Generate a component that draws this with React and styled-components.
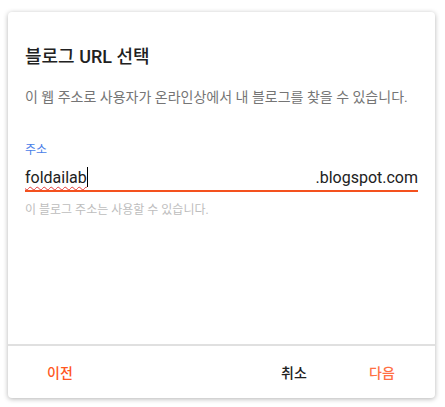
import React from "react";
import styled, { createGlobalStyle } from "styled-components";

const GlobalStyle = createGlobalStyle`
  html, body {
    margin: 0;
    padding: 0;
    background: #fff;
    font-family: Roboto, "Noto Sans CJK KR", sans-serif;
  }
`;

const Page = styled.div`
  padding: 12px 10px 9px 8px;
`;

const Card = styled.div`
  width: 427px;
  height: 386px;
  box-sizing: border-box;
  background: #fff;
  border-radius: 4px;
  box-shadow: 0 1px 5px rgba(0, 0, 0, 0.3);
  display: flex;
  flex-direction: column;
`;

const Body = styled.div`
  flex: 1;
  padding: 33px 17px 0 17px;
`;

const Title = styled.h2`
  margin: 0;
  font-size: 18px;
  font-weight: 500;
  color: #212121;
  line-height: 24px;
`;

const Desc = styled.p`
  margin: 18px 0 0;
  font-size: 14px;
  color: #757575;
  line-height: 20px;
`;

const Label = styled.div`
  margin-top: 35px;
  font-size: 12px;
  color: #4a7ee8;
  line-height: 16px;
`;

const Field = styled.div`
  margin-top: 9px;
  display: flex;
  align-items: flex-end;
  justify-content: space-between;
  border-bottom: 2px solid #f4511e;
  padding-bottom: 1px;
  font-size: 16px;
  color: #212121;
  line-height: 22px;
`;

const Typed = styled.span`
  text-decoration: underline wavy #e53935;
  text-decoration-thickness: 1px;
  text-underline-offset: 3px;
`;

const Caret = styled.span`
  display: inline-block;
  width: 1px;
  height: 20px;
  background: #000;
  vertical-align: -4px;
`;

const Helper = styled.div`
  margin-top: 10px;
  font-size: 12px;
  color: #bdbdbd;
  line-height: 16px;
`;

const Footer = styled.div`
  border-top: 2px solid #e0e0e0;
  height: 52px;
  display: flex;
  align-items: center;
  padding: 0 9px 0 8px;
`;

const Spacer = styled.div`
  flex: 1;
`;

const Button = styled.button`
  min-width: 88px;
  height: 36px;
  border: 0;
  background: none;
  font-family: inherit;
  font-size: 14px;
  font-weight: 500;
  color: ${(p) => p.color || "#212121"};
  padding: 0 8px;
  cursor: pointer;
`;

export default function App() {
  return (
    <>
      <GlobalStyle />
      <Page>
        <Card>
          <Body>
            <Title>블로그 URL 선택</Title>
            <Desc>이 웹 주소로 사용자가 온라인상에서 내 블로그를 찾을 수 있습니다.</Desc>
            <Label>주소</Label>
            <Field>
              <span>
                <Typed>foldailab</Typed>
                <Caret />
              </span>
              <span>.blogspot.com</span>
            </Field>
            <Helper>이 블로그 주소는 사용할 수 있습니다.</Helper>
          </Body>
          <Footer>
            <Button color="#ff5722">이전</Button>
            <Spacer />
            <Button>취소</Button>
            <Button color="#ff7043">다음</Button>
          </Footer>
        </Card>
      </Page>
    </>
  );
}
